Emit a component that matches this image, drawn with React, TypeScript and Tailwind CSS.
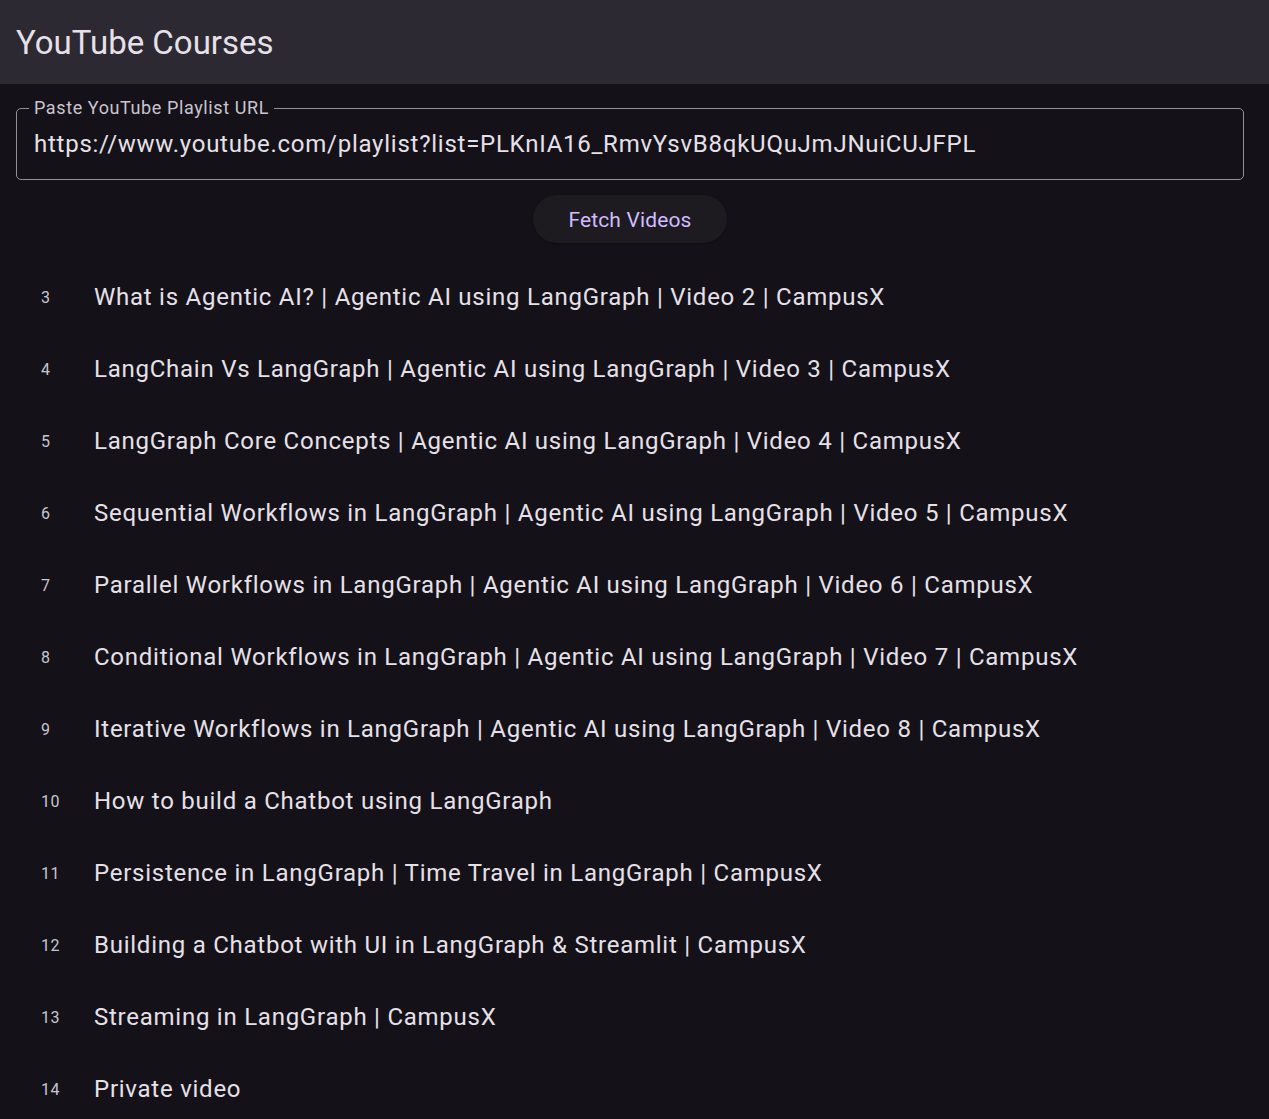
import React, { useState } from "react";

const videos = [
  { n: 3, title: "What is Agentic AI? | Agentic AI using LangGraph | Video 2 | CampusX" },
  { n: 4, title: "LangChain Vs LangGraph | Agentic AI using LangGraph | Video 3 | CampusX" },
  { n: 5, title: "LangGraph Core Concepts | Agentic AI using LangGraph | Video 4 | CampusX" },
  { n: 6, title: "Sequential Workflows in LangGraph | Agentic AI using LangGraph | Video 5 | CampusX" },
  { n: 7, title: "Parallel Workflows in LangGraph | Agentic AI using LangGraph | Video 6 | CampusX" },
  { n: 8, title: "Conditional Workflows in LangGraph | Agentic AI using LangGraph | Video 7 | CampusX" },
  { n: 9, title: "Iterative Workflows in LangGraph | Agentic AI using LangGraph | Video 8 | CampusX" },
  { n: 10, title: "How to build a Chatbot using LangGraph" },
  { n: 11, title: "Persistence in LangGraph | Time Travel in LangGraph | CampusX" },
  { n: 12, title: "Building a Chatbot with UI in LangGraph & Streamlit | CampusX" },
  { n: 13, title: "Streaming in LangGraph | CampusX" },
  { n: 14, title: "Private video" },
];

export default function App() {
  const [url, setUrl] = useState("https://www.youtube.com/playlist?list=PLKnIA16_RmvYsvB8qkUQuJmJNuiCUJFPL");

  return (
    <div className="h-[1119px] overflow-hidden bg-[#141218] text-[#e6e0e9] font-['Roboto',sans-serif]">
      {/* App bar */}
      <header className="h-[84px] bg-[#2c2932] flex items-center px-4">
        <h1 className="text-[33px] leading-none font-normal text-[#e6e0e9]">YouTube Courses</h1>
      </header>

      <main className="pl-4 pr-[25px] pt-[24px]">
        {/* URL field */}
        <div className="relative h-[72px] rounded-[5px] border border-[#938f99] flex items-center px-[17px]">
          <span className="absolute -top-[12px] left-[12px] bg-[#141218] px-[5px] text-[18px] leading-[22px] tracking-[0.6px] text-[#cac4d0]">
            Paste YouTube Playlist URL
          </span>
          <input
            value={url}
            onChange={(e) => setUrl(e.target.value)}
            className="w-full bg-transparent outline-none text-[24px] tracking-[0.75px] text-[#e6e0e9]"
          />
        </div>

        {/* Fetch button */}
        <div className="flex justify-center mt-[15px]">
          <button className="h-[48px] w-[194px] pt-[3px] rounded-full bg-[#1d1b20] text-[#d0bcff] text-[21px] tracking-[0.15px] shadow-[0_1px_2px_rgba(0,0,0,0.35)]">
            Fetch Videos
          </button>
        </div>

        {/* Video list */}
        <ul className="mt-[18px]">
          {videos.map((v) => (
            <li key={v.n} className="h-[72px] flex items-center">
              <span className="w-[78px] pl-[25px] pt-[2px] text-[16px] tracking-[0.4px] text-[#cac4d0]">{v.n}</span>
              <span className="text-[24px] tracking-[0.75px] text-[#e6e0e9] whitespace-nowrap">{v.title}</span>
            </li>
          ))}
        </ul>
      </main>
    </div>
  );
}
